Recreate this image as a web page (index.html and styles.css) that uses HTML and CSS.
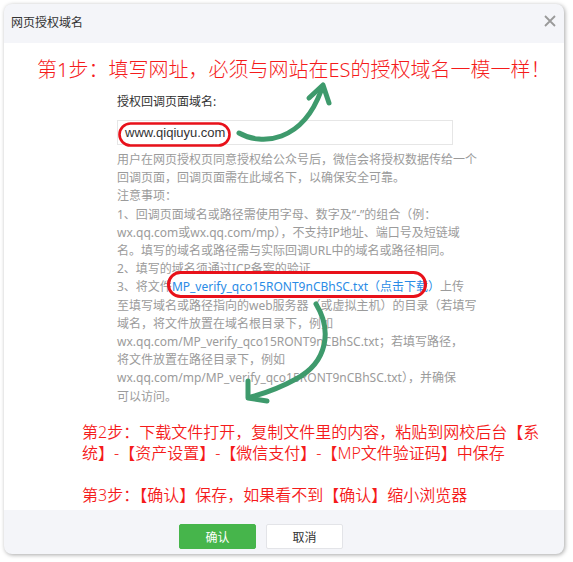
FILE: index.html
```html
<!DOCTYPE html>
<html lang="zh-CN">
<head>
    <meta charset="UTF-8">
    <title>网页授权域名</title>
    <link rel="stylesheet" href="styles.css">
</head>
<body>
    <div class="dialog">
        <div class="dialog-header">
            <span class="dialog-title">网页授权域名</span>
            <svg class="close-icon" width="12" height="12" viewBox="0 0 12 12">
                <path d="M1 1 L11 11 M11 1 L1 11" stroke="#9a9a9a" stroke-width="1.8" fill="none"/>
            </svg>
        </div>

        <div class="dialog-body">
            <div class="step-one">第1步：填写网址，必须与网站在ES的授权域名一模一样！</div>

            <div class="form-block">
                <div class="form-label">授权回调页面域名:</div>
                <div class="form-input">www.qiqiuyu.com</div>
                <p class="help-text">
                    用户在网页授权页同意授权给公众号后，微信会将授权数据传给一个<br>
                    回调页面，回调页面需在此域名下，以确保安全可靠。<br>
                    注意事项：<br>
                    1、回调页面域名或路径需使用字母、数字及“-”的组合（例：<br>
                    wx.qq.com或wx.qq.com/mp），不支持IP地址、端口号及短链域<br>
                    名。填写的域名或路径需与实际回调URL中的域名或路径相同。<br>
                    2、填写的域名须通过ICP备案的验证<br>
                    3、将文件<a class="download-link">MP_verify_qco15RONT9nCBhSC.txt（点击下载）</a>上传<br>
                    至填写域名或路径指向的web服务器（或虚拟主机）的目录（若填写<br>
                    域名，将文件放置在域名根目录下，例如<br>
                    wx.qq.com/MP_verify_qco15RONT9nCBhSC.txt；若填写路径，<br>
                    将文件放置在路径目录下，例如<br>
                    wx.qq.com/mp/MP_verify_qco15RONT9nCBhSC.txt），并确保<br>
                    可以访问。
                </p>
            </div>

            <div class="step-notes">
                第2步：下载文件打开，复制文件里的内容，粘贴到网校后台【系<br>
                统】-【资产设置】-【微信支付】-【MP文件验证码】中保存<br>
                <br>
                第3步：【确认】保存，如果看不到【确认】缩小浏览器
            </div>
        </div>

        <div class="dialog-footer">
            <button class="btn btn-primary">确认</button>
            <button class="btn btn-default">取消</button>
        </div>
    </div>

    <!-- annotations drawn over the dialog -->
    <svg class="marks" width="573" height="562" viewBox="0 0 573 562">
        <rect x="119.5" y="123.5" width="110" height="22" rx="11" fill="none" stroke="#e8111a" stroke-width="2.6"/>
        <rect x="168.5" y="272.5" width="257" height="24" rx="12" fill="none" stroke="#e8111a" stroke-width="3"/>
        <g fill="none" stroke="#3e9a6c" stroke-width="5" stroke-linecap="round" stroke-linejoin="round">
            <path d="M239 133 C262 146 302 142 321 91"/>
            <path d="M309 98 L323 85 L329 103"/>
            <path d="M316 304 C332 330 328 362 296 379 C278 389 262 394 251 397"/>
            <path d="M248 381 L248 398 L267 401"/>
        </g>
    </svg>
</body>
</html>
```

FILE: styles.css
```css
body {
    margin: 0;
    position: relative;
    width: 573px;
    height: 562px;
    background-color: #fff;
    font-family: "Noto Sans", "Noto Sans CJK SC", sans-serif;
    color: #333;
}
.dialog {
    position: absolute;
    left: 4px;
    top: 4px;
    width: 560px;
    height: 550px;
    display: flex;
    flex-direction: column;
    border-radius: 8px;
    overflow: hidden;
    background-color: #f4f5f9;
    box-shadow: 1px 1px 4px rgba(0,0,0,0.35);
}
.dialog-header {
    height: 39px;
    display: flex;
    align-items: center;
    justify-content: space-between;
    padding: 0 8px 0 7px;
    flex-shrink: 0;
}
.dialog-title {
    font-size: 12px;
    color: #333;
    margin-top: -3px;
}
.close-icon {
    margin-top: -6px;
}
.dialog-body {
    height: 467px;
    background-color: #fff;
    flex-shrink: 0;
    padding-top: 13px;
    box-sizing: border-box;
}
.step-one {
    font-size: 20px;
    line-height: 28px;
    font-weight: 300;
    color: #f51b1b;
    padding-left: 33px;
    white-space: nowrap;
}
.form-block {
    margin-left: 113px;
    width: 336px;
    margin-top: 9px;
}
.form-label {
    font-size: 12px;
    line-height: 18px;
    color: #333;
}
.form-input {
    margin-top: 9px;
    height: 23px;
    line-height: 23px;
    border: 1px solid #e6e6e6;
    padding-left: 7px;
    font-family: "Liberation Sans", "Noto Sans CJK SC", sans-serif;
    font-size: 13px;
    color: #333;
}
.help-text {
    margin: 6px 0 0;
    font-size: 12px;
    line-height: 18.2px;
    color: #9b9b9b;
    white-space: nowrap;
}
.download-link {
    color: #2a8be6;
}
.step-notes {
    margin-top: 16px;
    padding-left: 78px;
    font-size: 16px;
    line-height: 21px;
    font-weight: 350;
    color: #f51b1b;
    white-space: nowrap;
}
.dialog-footer {
    flex: 1;
    padding: 14px 0 0 175px;
    display: flex;
    gap: 10px;
    align-items: flex-start;
}
.btn {
    width: 77px;
    height: 25px;
    font-family: "Noto Sans CJK SC", sans-serif;
    font-size: 12px;
    border-radius: 2px;
    padding: 0;
}
.btn-primary {
    background-color: #46b54b;
    border: 1px solid #46b54b;
    color: #fff;
}
.btn-default {
    background-color: #fff;
    border: 1px solid #e3e4e8;
    color: #333;
}
.marks {
    position: absolute;
    left: 0;
    top: 0;
    pointer-events: none;
}
```
